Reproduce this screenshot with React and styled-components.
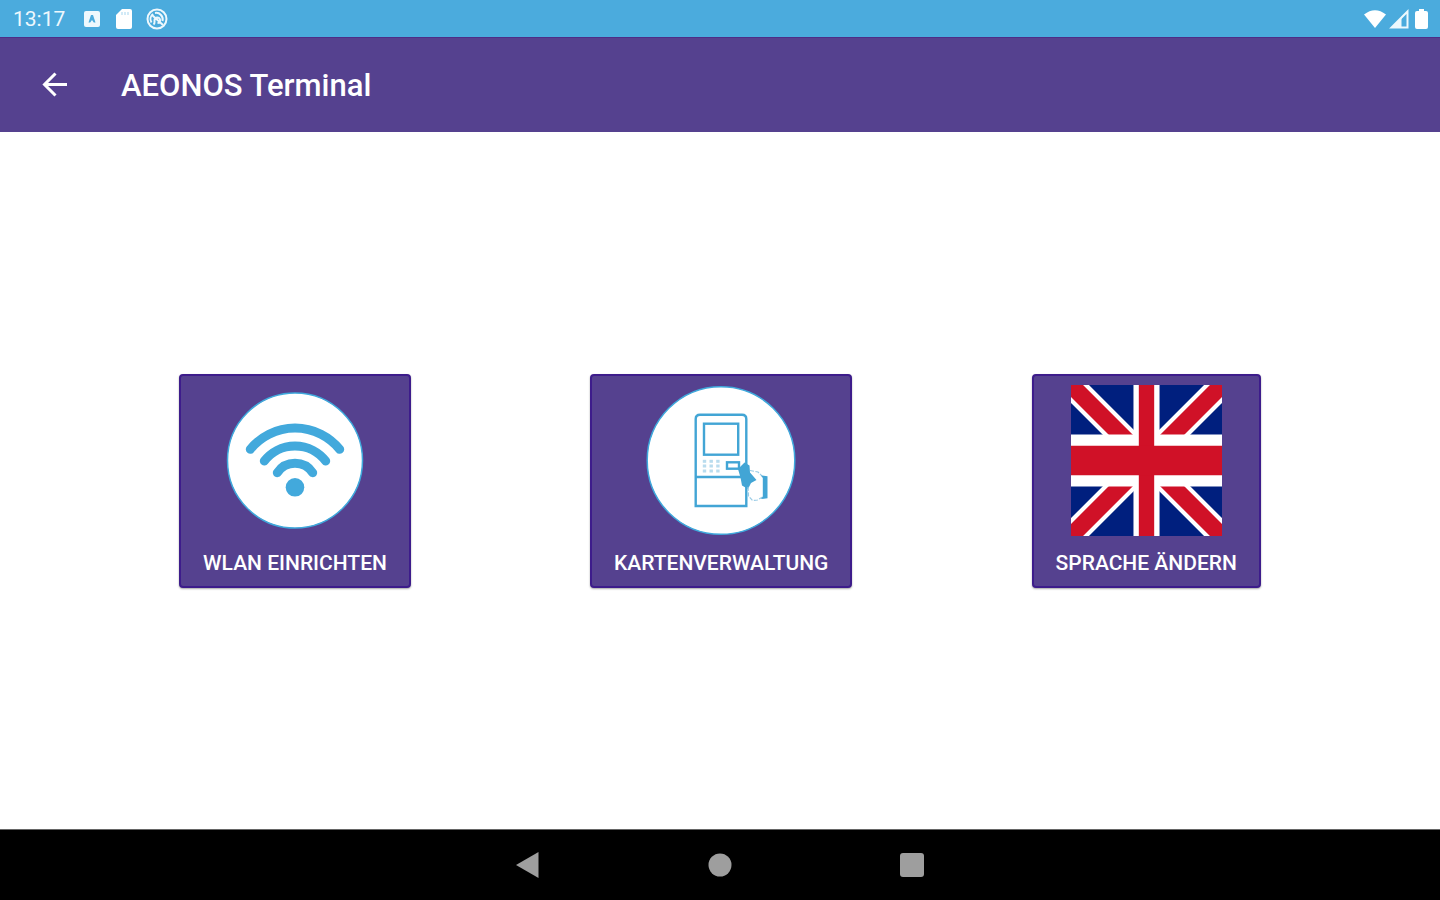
import React from 'react';
import styled, { createGlobalStyle } from 'styled-components';

const GlobalStyle = createGlobalStyle`
  * {
    box-sizing: border-box;
  }

  body {
    margin: 0;
    background: #ffffff;
    font-family: Roboto, 'Liberation Sans', sans-serif;
  }
`;

const Screen = styled.div`
  display: flex;
  flex-direction: column;
  min-height: 100vh;
`;

const StatusBar = styled.div`
  display: flex;
  align-items: center;
  justify-content: space-between;
  height: 37px;
  padding: 0 10px 0 13px;
  background: #4babdd;
  color: #eef8fd;
`;

const StatusGroup = styled.div`
  display: flex;
  align-items: center;
  gap: ${({ $gap }) => $gap}px;

  svg {
    display: block;
  }
`;

const Clock = styled.time`
  margin-right: 4px;
  font-size: 21px;
  line-height: 24px;
`;

const AppBar = styled.header`
  display: flex;
  align-items: center;
  gap: 40px;
  height: 95px;
  padding: 0 28px;
  background: #55418f;
  border-top: 1px solid #4d2d88;
  color: #ffffff;
`;

const BackButton = styled.button`
  display: flex;
  align-items: center;
  justify-content: center;
  width: 53px;
  height: 48px;
  padding: 0;
  border: 0;
  background: none;
  color: inherit;
  cursor: pointer;
`;

const Title = styled.h1`
  margin: 0;
  padding-top: 2px;
  font-size: 31px;
  font-weight: 500;
  line-height: 36px;
`;

const Tiles = styled.main`
  display: flex;
  flex: 1;
  flex-wrap: wrap;
  align-items: center;
  justify-content: space-evenly;
`;

const Tile = styled.button`
  display: flex;
  flex-direction: column;
  align-items: center;
  gap: 14px;
  padding: 9px 22px 10px;
  border: 2px solid #3d1c8b;
  border-radius: 4px;
  background: #55418f;
  box-shadow: 0 1px 2px rgba(0, 0, 0, 0.35);
  color: #ffffff;
  font-family: inherit;
  font-size: 21px;
  font-weight: 500;
  line-height: 26px;
  text-transform: uppercase;
  cursor: pointer;

  svg {
    display: block;
  }
`;

const NavBar = styled.nav`
  display: flex;
  align-items: center;
  justify-content: center;
  gap: 144px;
  height: 71px;
  border-top: 1px solid #666666;
  background: #000000;
`;

const NavButton = styled.button`
  display: flex;
  align-items: center;
  justify-content: center;
  width: 48px;
  height: 48px;
  padding: 0;
  border: 0;
  background: none;
  color: #9e9e9e;
  cursor: pointer;
`;

const WifiIcon = () => (
  <svg width="152" height="151" viewBox="0 0 152 151" fill="none" aria-hidden="true">
    <circle cx="76" cy="75.5" r="67.5" fill="#fff" stroke="#3fa9dc" strokeWidth="1.5" />
    <g stroke="#42a9dc" strokeWidth="9" strokeLinecap="round">
      <path d="M31.3 64.3a57.6 57.6 0 0 1 89.4 0" />
      <path d="M45.3 76a38.9 38.9 0 0 1 61.4 0" />
      <path d="M58.3 87.7a21.4 21.4 0 0 1 35.4 0" />
    </g>
    <circle cx="76" cy="102.3" r="9.3" fill="#42a9dc" />
  </svg>
);

const keyRows = [76.3, 81, 86];
const keyColumns = [59.3, 66, 72.7];

const TerminalIcon = () => (
  <svg width="152" height="151" viewBox="0 0 152 151" fill="none" aria-hidden="true">
    <circle cx="76" cy="75.5" r="73.8" fill="#fff" stroke="#3fa9dc" strokeWidth="1.5" />
    <g stroke="#42a5d5" strokeWidth="2.4">
      <path d="M50.7 121V34q0-4.300 4.300-4.300h42q4.300 0 4.300 4.300v87z" />
      <path d="M50.7 92h50.6" />
      <rect x="59" y="38.7" width="34.2" height="31" />
      <rect x="82" y="77.3" width="12" height="6.4" />
    </g>
    <g fill="#b9dcee">
      {keyRows.map((y) =>
        keyColumns.map((x) => (
          <rect key={`${x}-${y}`} x={x - 1.5} y={y - 1.5} width="3.4" height="3" />
        ))
      )}
    </g>
    <path d="M93 84l6.500-6.500 5 3 .5 7 6.500 7.500-5.500 3-3 6-6-3.500-1.500-8z" fill="#42a5d5" />
    <path
      d="M105 85.5l8 1.5 5 5M117.5 112l-5 3-5 .5-4-4.5-.5-10"
      stroke="#98cbe6"
      strokeWidth="1.2"
      strokeDasharray="4 1.5"
    />
    <path d="M116 90.5l6.500.8v22l-6.500.7 1.800-2.500V93z" fill="#42a5d5" />
  </svg>
);

const FlagIcon = () => (
  <svg width="151" height="151" viewBox="0 0 452 452" aria-hidden="true">
    <path d="M0 0h452v452H0z" fill="#001f7e" />
    <path d="M0 0l452 452M452 0L0 452" stroke="#fff" strokeWidth="76" />
    <path d="M0 0l452 452M452 0L0 452" stroke="#d01127" strokeWidth="51" />
    <path d="M226 0v452" stroke="#fff" strokeWidth="78" />
    <path d="M0 226h452" stroke="#fff" strokeWidth="156" />
    <path d="M226 0v452" stroke="#d01127" strokeWidth="46" />
    <path d="M0 226h452" stroke="#d01127" strokeWidth="88" />
  </svg>
);

const tiles = [
  { label: 'WLAN einrichten', Icon: WifiIcon },
  { label: 'Kartenverwaltung', Icon: TerminalIcon },
  { label: 'Sprache ändern', Icon: FlagIcon }
];

const App = () => (
  <>
    <GlobalStyle />
    <Screen>
      <StatusBar>
        <StatusGroup $gap={13}>
          <Clock>13:17</Clock>
          <svg width="20" height="18" viewBox="0 0 20 18" aria-hidden="true">
            <rect x="2" y="1" width="16" height="16" rx="2" fill="#eef8fd" />
            <path d="M6.5 12.5L9 5h2l2.500 7.500h-1.700L10 10l-1.800 2.500z" fill="#4babdd" />
          </svg>
          <svg width="18" height="20" viewBox="0 0 18 20" aria-hidden="true">
            <path d="M7 0h8q2 0 2 2v16q0 2-2 2H3q-2 0-2-2V6z" fill="#fff" />
            <path d="M7 3v3M10 3v3M13 3v3" stroke="#b5ddf2" strokeWidth="1.2" />
          </svg>
          <svg width="22" height="22" viewBox="0 0 22 22" fill="none" stroke="#eef8fd" aria-hidden="true">
            <circle cx="11" cy="11" r="9.5" strokeWidth="2" />
            <path d="M5.500 14.500A6.500 6.500 0 0 1 7 6M9 5a6.500 6.500 0 0 1 7.500 8" strokeWidth="2" />
            <path d="M7.500 16.500c1.500-1 1-2 1-4a2.800 2.800 0 1 1 3 2.500M6 7l11 10" strokeWidth="2" />
          </svg>
        </StatusGroup>
        <StatusGroup $gap={3}>
          <svg width="22" height="18" viewBox="0 0 22 18" aria-hidden="true">
            <path d="M0 4.500Q11-4 22 4.500L11 18z" fill="#fff" />
          </svg>
          <svg width="20" height="20" viewBox="0 0 20 20" fill="none" aria-hidden="true">
            <path d="M2.500 18.500h16v-16z" stroke="#eef8fd" strokeWidth="2" />
            <path d="M2 19L12.500 8.500V19z" fill="#eef8fd" />
          </svg>
          <svg width="18" height="20" viewBox="0 0 18 20" aria-hidden="true">
            <path d="M7 0h5v2h2q2 0 2 2v14q0 2-2 2H5q-2 0-2-2V4q0-2 2-2h2z" fill="#fff" />
          </svg>
        </StatusGroup>
      </StatusBar>

      <AppBar>
        <BackButton aria-label="Zurück">
          <svg width="26" height="26" viewBox="0 0 26 26" fill="none" stroke="currentColor" strokeWidth="3" aria-hidden="true">
            <path d="M25 12.500H3M13.500 1.500l-11 11 11 11" />
          </svg>
        </BackButton>
        <Title>AEONOS Terminal</Title>
      </AppBar>

      <Tiles>
        {tiles.map(({ label, Icon }) => (
          <Tile key={label}>
            <Icon />
            {label}
          </Tile>
        ))}
      </Tiles>

      <NavBar>
        <NavButton aria-label="Zurück">
          <svg width="26" height="26" viewBox="0 0 26 26" fill="currentColor" aria-hidden="true">
            <path d="M23.500 0v26L1 13z" />
          </svg>
        </NavButton>
        <NavButton aria-label="Startseite">
          <svg width="24" height="24" viewBox="0 0 24 24" fill="currentColor" aria-hidden="true">
            <circle cx="12" cy="12" r="11.500" />
          </svg>
        </NavButton>
        <NavButton aria-label="Übersicht">
          <svg width="24" height="24" viewBox="0 0 24 24" fill="currentColor" aria-hidden="true">
            <rect width="24" height="24" rx="3" />
          </svg>
        </NavButton>
      </NavBar>
    </Screen>
  </>
);

export default App;
